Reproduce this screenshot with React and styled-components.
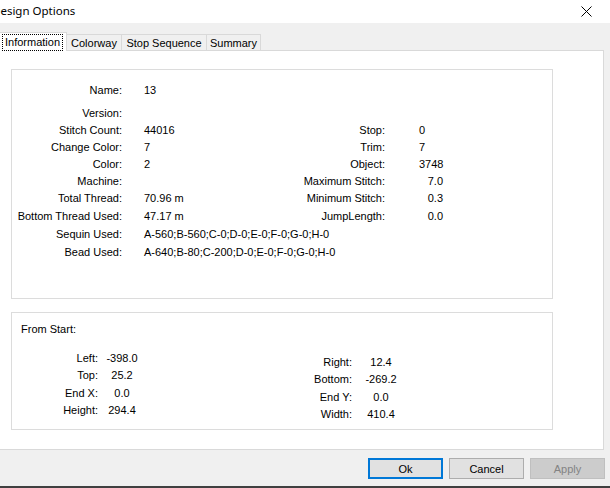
import React from 'react';
import styled, { createGlobalStyle } from 'styled-components';

const GlobalStyle = createGlobalStyle`
html, body {
  margin: 0;
  padding: 0;
  background: #f0f0f0;
  overflow: hidden;
}
* { box-sizing: border-box; }
`;

const Window = styled.div`
width: 610px;
height: 488px;
display: flex;
flex-direction: column;
background: #f0f0f0;
font-family: "Liberation Sans", Arial, sans-serif;
font-size: 11px;
color: #000;
border-bottom: 2px solid #404040;
overflow: hidden;
`;

const TitleBar = styled.div`
height: 23px;
flex: none;
background: #fff;
display: flex;
align-items: center;
justify-content: space-between;
`;

const Title = styled.div`
margin-left: -8px;
margin-top: -2px;
font-family: "Noto Sans", "Open Sans", sans-serif;
font-size: 11.5px;
`;

const CloseButton = styled.div`
width: 46px;
height: 23px;
margin-right: 1px;
display: flex;
align-items: center;
justify-content: center;
`;

const TabBar = styled.div`
height: 27px;
flex: none;
display: flex;
align-items: flex-end;
position: relative;
z-index: 1;
`;

const Tab = styled.div`
width: ${p => p.$w}px;
height: ${p => (p.$active ? 19 : 16)}px;
margin-left: ${p => p.$ml || 0}px;
margin-bottom: ${p => (p.$active ? -1 : 0)}px;
background: ${p => (p.$active ? '#fff' : '#f0f0f0')};
border: 1px solid #d9d9d9;
border-bottom: none;
border-left-width: ${p => (p.$first ? 1 : 0)}px;
display: flex;
align-items: center;
justify-content: center;
line-height: 13px;
padding-top: ${p => (p.$active ? 0 : 1)}px;
`;

const FocusText = styled.span`
outline: 1px dotted #000;
outline-offset: 1px;
padding: 0 1px;
`;

const TabPage = styled.div`
height: 400px;
flex: none;
margin-left: -1px;
margin-right: 6px;
background: #fff;
border: 1px solid #d9d9d9;
padding: 18px 0 0 11px;
display: flex;
flex-direction: column;
gap: 13px;
`;

const Group = styled.div`
width: 542px;
height: ${p => p.$h}px;
border: 1px solid #dcdcdc;
padding-top: ${p => p.$pt}px;
`;

const Row = styled.div`
display: flex;
height: ${p => p.$h}px;
line-height: 17px;
white-space: nowrap;
`;

const Label = styled.div`
width: ${p => p.$w}px;
text-align: right;
flex: none;
`;

const Value = styled.div`
width: ${p => p.$w ? `${p.$w}px` : 'auto'};
margin-left: ${p => p.$ml}px;
text-align: ${p => p.$align || 'left'};
flex: none;
`;

const GroupTitle = styled.div`
margin-left: 9px;
line-height: 17px;
height: 17px;
`;

const Columns = styled.div`
display: flex;
margin-top: 12px;
`;

const Column = styled.div`
display: grid;
grid-template-columns: ${p => p.$label}px ${p => p.$value}px;
column-gap: ${p => p.$gap}px;
grid-auto-rows: 17.3px;
line-height: 17px;
margin-left: ${p => p.$ml}px;
margin-top: ${p => p.$mt || 0}px;
`;

const Cell = styled.div`
text-align: ${p => p.$align};
white-space: nowrap;
`;

const ButtonBar = styled.div`
flex: 1;
display: flex;
justify-content: flex-end;
align-items: flex-start;
padding: 8px 5px 0 0;
gap: 6px;
`;

const Button = styled.div`
width: 75px;
height: 21px;
display: flex;
align-items: center;
justify-content: center;
background: ${p => (p.$disabled ? '#cccccc' : '#e1e1e1')};
color: ${p => (p.$disabled ? '#838383' : '#000')};
border: 1px solid ${p => (p.$default ? '#0078d7' : p.$disabled ? '#bfbfbf' : '#adadad')};
box-shadow: ${p => (p.$default ? 'inset 0 0 0 1px #0078d7' : 'none')};
`;

const tabs = [
  { name: 'Information', w: 69, ml: -2, active: true },
  { name: 'Colorway', w: 55 },
  { name: 'Stop Sequence', w: 85 },
  { name: 'Summary', w: 54 },
];

const infoRows = [
  { h: 23, l: 'Name:', v: '13' },
  { h: 17, l: 'Version:', v: '' },
  { h: 17, l: 'Stitch Count:', v: '44016', l2: 'Stop:', v2: '0' },
  { h: 17, l: 'Change Color:', v: '7', l2: 'Trim:', v2: '7' },
  { h: 17, l: 'Color:', v: '2', l2: 'Object:', v2: '3748' },
  { h: 17, l: 'Machine:', v: '', l2: 'Maximum Stitch:', v2: '7.0', r: true },
  { h: 18, l: 'Total Thread:', v: '70.96 m', l2: 'Minimum Stitch:', v2: '0.3', r: true },
  { h: 18, l: 'Bottom Thread Used:', v: '47.17 m', l2: 'JumpLength:', v2: '0.0', r: true },
  { h: 18, l: 'Sequin Used:', v: 'A-560;B-560;C-0;D-0;E-0;F-0;G-0;H-0', wide: true },
  { h: 18, l: 'Bead Used:', v: 'A-640;B-80;C-200;D-0;E-0;F-0;G-0;H-0', wide: true },
];

const leftStart = [
  ['Left:', '-398.0'],
  ['Top:', '25.2'],
  ['End X:', '0.0'],
  ['Height:', '294.4'],
];

const rightStart = [
  ['Right:', '12.4'],
  ['Bottom:', '-269.2'],
  ['End Y:', '0.0'],
  ['Width:', '410.4'],
];

const CloseIcon = () => (
  <svg width="11" height="11" viewBox="0 0 11 11">
    <path d="M0.5 0.5 L10.5 10.5 M10.5 0.5 L0.5 10.5" stroke="#000" strokeWidth="1" fill="none" />
  </svg>
);

export default function App() {
  return (
    <>
      <GlobalStyle />
      <Window>
        <TitleBar>
          <Title>Design Options</Title>
          <CloseButton><CloseIcon /></CloseButton>
        </TitleBar>
        <TabBar>
          {tabs.map((t, i) => (
            <Tab key={t.name} $w={t.w} $ml={t.ml} $active={t.active} $first={i === 0}>
              {t.active ? <FocusText>{t.name}</FocusText> : t.name}
            </Tab>
          ))}
        </TabBar>
        <TabPage>
          <Group $h={230} $pt={12}>
            {infoRows.map(r => (
              <Row key={r.l} $h={r.h}>
                <Label $w={110}>{r.l}</Label>
                <Value $ml={22} $w={r.wide ? 0 : 136}>{r.v}</Value>
                {r.l2 && <Label $w={105}>{r.l2}</Label>}
                {r.l2 && <Value $ml={34} $w={24} $align={r.r ? 'right' : 'left'}>{r.v2}</Value>}
              </Row>
            ))}
          </Group>
          <Group $h={118} $pt={8}>
            <GroupTitle>From Start:</GroupTitle>
            <Columns>
              <Column $label={86} $value={40} $gap={4} $ml={0}>
                {leftStart.map(([l, v]) => (
                  <React.Fragment key={l}>
                    <Cell $align="right">{l}</Cell>
                    <Cell $align="center">{v}</Cell>
                  </React.Fragment>
                ))}
              </Column>
              <Column $label={60} $value={38} $gap={10} $ml={150} $mt={4}>
                {rightStart.map(([l, v]) => (
                  <React.Fragment key={l}>
                    <Cell $align="right">{l}</Cell>
                    <Cell $align="center">{v}</Cell>
                  </React.Fragment>
                ))}
              </Column>
            </Columns>
          </Group>
        </TabPage>
        <ButtonBar>
          <Button $default>Ok</Button>
          <Button>Cancel</Button>
          <Button $disabled>Apply</Button>
        </ButtonBar>
      </Window>
    </>
  );
}
